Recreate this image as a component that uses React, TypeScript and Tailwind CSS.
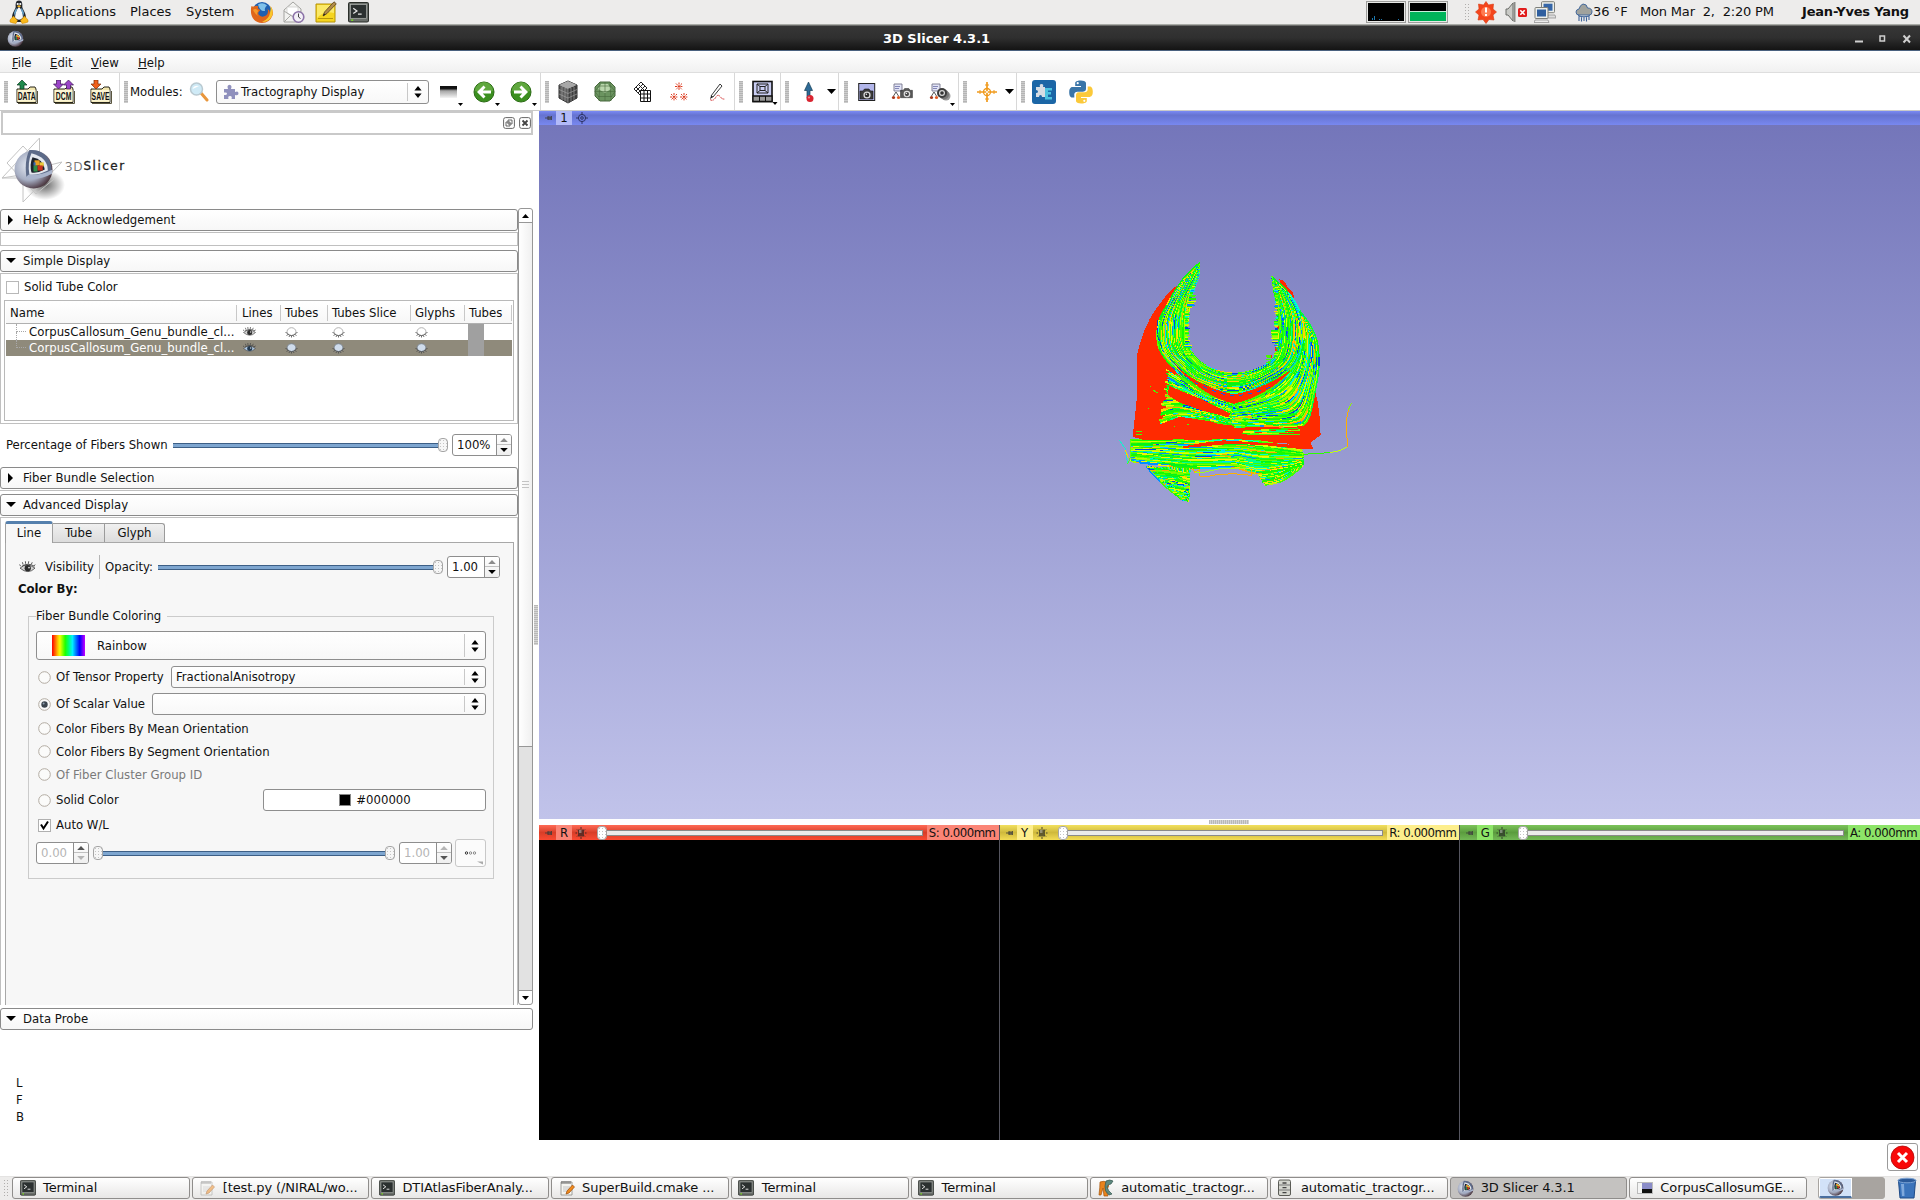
import React from "react";

type P = [number, number];
type KidProps = { className?: string; children?: React.ReactNode };

/* ---------- small shared widgets ---------- */

const Svg = ({ w, h, className = "", children, vb }: { w: number; h: number; className?: string; children: React.ReactNode; vb?: string }) => (
  <svg width={w} height={h} viewBox={vb ?? `0 0 ${w} ${h}`} className={`block shrink-0 ${className}`}>{children}</svg>
);

const Grip = ({ className = "" }: KidProps) => (
  <div className={`h-[22px] w-[4px] shrink-0 bg-[repeating-linear-gradient(180deg,#b4b4b4_0_1px,#cdcdcd_1px_2px)] ${className}`} />
);
const Sep = ({ className = "" }: KidProps) => <div className={`h-full w-px shrink-0 bg-[#d8d8d8] ${className}`} />;

const Dots = ({ className = "" }: KidProps) => (
  <div className={`shrink-0 bg-[radial-gradient(circle,#b0aeac_0.6px,transparent_1px)] bg-[length:3px_3px] ${className}`} />
);

const UpDown = () => (
  <div className="flex h-full w-[21px] shrink-0 items-center py-[2px]">
    <div className="h-full w-px bg-[#c8c8c8]" />
    <Svg w={8} h={12} className="ml-[6px]"><path d="M4 0L7.6 4.4H.4zM4 12L7.6 7.6H.4z" fill="#000" /></Svg>
  </div>
);

const Combo = ({ className = "", children }: KidProps) => (
  <div className={`flex items-center rounded-[3px] border border-[#8e8e8e] bg-linear-to-b from-white to-[#f8f8f8] ${className}`}>
    <div className="flex grow items-center">{children}</div>
    <UpDown />
  </div>
);

const Slider = ({ className = "", double = false }: { className?: string; double?: boolean }) => (
  <div className={`flex h-[14px] items-center ${className}`}>
    {double && <Thumb />}
    <div className="h-[5px] grow border-y border-[#3d5f86] bg-[#7ea6d0]" />
    <Thumb />
  </div>
);
const Thumb = ({ className = "" }: KidProps) => (
  <div className={`h-[14px] w-[10px] shrink-0 rounded-[4px] border border-[#a5a5a5] bg-[#f6f6f6] bg-[radial-gradient(circle,#c4c4c4_0.6px,transparent_1px)] bg-[length:3px_3px] ${className}`} />
);

const Spin = ({ value, className = "", off, up = "#8c8c8c", down = "#000" }: { value: string; className?: string; off?: boolean; up?: string; down?: string }) => (
  <div className={`flex h-[22px] shrink-0 overflow-hidden rounded-[3px] border border-[#8e8e8e] bg-white ${className}`}>
    <div className={`flex grow items-center pl-[4px] ${off ? "text-[#b5b5b5]" : ""}`}>{value}</div>
    <div className="flex w-[15px] flex-col border-l border-[#8e8e8e] bg-linear-to-b from-white to-[#efefef]">
      <div className="flex h-[10px] items-center justify-center border-b border-[#c0c0c0]">
        <Svg w={8} h={4}><path d="M4 0L7.8 4H.2z" fill={up} /></Svg>
      </div>
      <div className="flex h-[10px] items-center justify-center">
        <Svg w={8} h={4}><path d="M4 4L7.8 0H.2z" fill={down} /></Svg>
      </div>
    </div>
  </div>
);

const Section = ({ title, open, className = "" }: { title: string; open?: boolean; className?: string }) => (
  <div className={`flex h-[22px] shrink-0 items-center rounded-[3px] border border-[#8a8a8a] bg-linear-to-b from-white to-[#f7f7f7] ${className}`}>
    <Svg w={10} h={10} className="ml-[5px]">
      {open ? <path d="M0 2H10L5 7z" fill="#000" /> : <path d="M2 0V10L7 5z" fill="#000" />}
    </Svg>
    <span className="ml-[7px] tracking-[0.04px]">{title}</span>
  </div>
);

const Radio = ({ on, label, dim }: { on?: boolean; label: string; dim?: boolean }) => (
  <div className="flex shrink-0 items-center">
    <Svg w={13} h={13}>
      <circle cx="6.5" cy="6.5" r="5.8" fill="#fbfbfa" stroke="#b3aca3" />
      {on && <circle cx="6.5" cy="6.5" r="3.2" fill="#3b444d" />}
      {on && <circle cx="5.6" cy="5.6" r="1" fill="#8fa0b0" />}
    </Svg>
    <span className={`ml-[5px] ${dim ? "text-[#7a7a7a]" : ""}`}>{label}</span>
  </div>
);

/* ---------- icons ---------- */

const Ball = ({ w, className = "" }: { w: number; className?: string }) => (
  <svg width={w} height={w} viewBox="0 0 40 40" className={`block shrink-0 ${className}`}>
    <defs>
      <radialGradient id="ball" cx=".38" cy=".4" r=".7">
        <stop offset="0" stopColor="#e8edf6" /><stop offset=".55" stopColor="#a5adc2" /><stop offset=".85" stopColor="#5a4a55" /><stop offset="1" stopColor="#3a2226" />
      </radialGradient>
    </defs>
    <circle cx="20" cy="21" r="18.5" fill="url(#ball)" />
    <path d="M16 2Q11 12 13 28Q20 31 37 25A19 19 0 0 0 16 2z" fill="#5c6a88" />
    <path d="M18 5Q14 14 16 26Q24 27 34 22Q34 9 18 5z" fill="#e4e8ef" />
    <path d="M19 9Q16 16 18 24Q24 25 31 21Q30 11 19 9z" fill="#1c222c" />
    <path d="M20 17h4v6h-4z" fill="#2f8f4a" /><path d="M21 12h5v5h-5z" fill="#e8a020" /><path d="M26 14h4v4h-4z" fill="#e9c93c" />
    <path d="M24 17h5v5h-5z" fill="#c8321e" /><path d="M20 14h2v3h-2z" fill="#3468b8" />
    <path d="M12 29Q25 32 38 25L38.5 21Q28 27 15 26z" fill="#a9b4cc" />
  </svg>
);

const FolderIcon = ({ label, kind, className = "" }: { label: string; kind: "up" | "both" | "down"; className?: string }) => (
  <Svg w={22} h={24} className={className}>
    <path d="M1 9H12L14 7H19L20 9V22.5H1z" fill="#f2e6ad" stroke="#26241a" />
    <path d="M1.5 10H19.5V21.5H1.5z" fill="#fbf5d3" />
    <path d="M2 23.5H21.5V11" stroke="#5a5640" fill="none" />
    {kind === "up" && <path d="M6 0L11 5H8V9H4V5H1z" fill="#1f8a4c" stroke="#0d3b20" strokeWidth=".7" />}
    {kind === "both" && <><path d="M15.500 0L20.500 5H17.500V9H13.500V5H10.500z" fill="#9a45c8" stroke="#3a1350" strokeWidth=".7" /><path d="M5.500 9L10.500 4H7.500V0H3.500V4H.5z" fill="#9a45c8" stroke="#3a1350" strokeWidth=".7" /></>}
    {kind === "down" && <path d="M6 9L11 4H8V0H4V4H1z" fill="#f0601c" stroke="#7a2c08" strokeWidth=".7" />}
    <text transform="translate(10.600 20) scale(.68 1)" fontSize="10" fontWeight="bold" fontFamily="Liberation Sans, sans-serif" textAnchor="middle" fill="#111">{label}</text>
  </Svg>
);

const NavIcon = ({ right, className = "" }: { right?: boolean; className?: string }) => (
  <Svg w={22} h={22} className={className}>
    <circle cx="11" cy="11" r="10" fill="#3b8f1f" stroke="#2a6b14" />
    <path d="M2 10A9 9 0 0 1 20 10Q11 13 2 10z" fill="#6fb04c" opacity=".7" />
    <path transform={right ? "translate(22 0) scale(-1 1)" : undefined} d="M4 11L10.500 4.500L12.500 6.500L9.800 9.500H18V12.500H9.800L12.500 15.500L10.500 17.500z" fill="#fff" />
  </Svg>
);

const TinyTri = ({ className = "" }: KidProps) => <Svg w={5} h={3} className={className}><path d="M0 0H5L2.500 3z" fill="#000" /></Svg>;
const MenuTri = ({ className = "" }: KidProps) => <Svg w={9} h={5} className={className}><path d="M0 0H9L4.500 5z" fill="#000" /></Svg>;

const Camera = ({ x, y, s = 1 }: { x: number; y: number; s?: number }) => (
  <g transform={`translate(${x} ${y}) scale(${s})`}>
    <path d="M0 2H3L4.500 0H9L10.500 2H13V10H0z" fill="#3b3b3b" stroke="#151515" strokeWidth=".6" />
    <circle cx="7" cy="6" r="3.600" fill="#dcdcdc" /><circle cx="7" cy="6" r="2.300" fill="#2a2a2a" /><circle cx="6.400" cy="5.300" r=".8" fill="#e9e9e9" />
  </g>
);

const SceneCam = ({ layered }: { layered?: boolean }) => (
  <Svg w={22} h={18}>
    <path d="M3 1H11V8H3z" fill="#e2e4f6" stroke="#77778c" strokeWidth=".9" /><path d="M4 3.500H9M4 5.500H8" stroke="#6c70a8" strokeWidth=".8" />
    <path d="M2.500 13L5 9L7.500 13" stroke="#444" strokeWidth=".9" fill="none" />
    <circle cx="2.500" cy="14.500" r="1.600" fill="#a8381c" /><circle cx="7.500" cy="14.500" r="1.600" fill="#e05a22" />
    {layered ? (
      <><circle cx="17" cy="13" r="4.500" fill="#9a9a9a" /><circle cx="15" cy="11.500" r="5" fill="#777" /><circle cx="13" cy="10" r="5" fill="#3d3d3d" /><circle cx="13" cy="10" r="3" fill="#d8d8d8" /><circle cx="13" cy="10" r="1.800" fill="#333" /></>
    ) : <g opacity=".85"><Camera x={9.500} y={5.500} s={0.92} /></g>}
  </Svg>
);

const Terminal = ({ w = 16 }: { w?: number }) => (
  <svg width={w} height={w} viewBox="0 0 20 20" className="block shrink-0">
    <rect x=".5" y=".5" width="19" height="18.500" rx="1.500" fill="#6b6f6b" stroke="#2b2f2b" />
    <rect x="2.500" y="2.500" width="15" height="13" fill="#2b3030" stroke="#b8bcb8" strokeWidth=".6" />
    <path d="M5 6L8.500 8.500L5 11M9.500 11.500H13" stroke="#e5e5e5" fill="none" strokeWidth="1.200" />
    <path d="M3 17.300H5" stroke="#7cdc20" strokeWidth="1.400" />
  </svg>
);

const Notepad = ({ faded }: { faded?: boolean }) => (
  <Svg w={16} h={16} className={faded ? "opacity-50" : ""}>
    <path d="M2 2H13V15H2z" fill="#f4f4f0" stroke="#8a8a86" strokeWidth=".8" />
    <path d="M3 1V4M5 1V4M7 1V4M9 1V4M11 1V4" stroke="#555" strokeWidth=".9" />
    <path d="M4 7H11M4 9H11M4 11H9" stroke="#b8b8b8" strokeWidth=".8" />
    <path d="M7 14L8 11L13.500 5L15.500 7L10 13z" fill="#f08a1c" stroke="#9b4a08" strokeWidth=".7" />
  </Svg>
);

const Tux = () => (
  <Svg w={20} h={24}>
    <path d="M10 .5C6.500 .5 6.500 4 6.700 7C6 10 3 13 3 18L7 22H13L17 18C17 13 14 10 13.300 7C13.500 4 13.500 .5 10 .5z" fill="#20242b" />
    <path d="M10 7C8 9 6 13 6 17.500Q10 22 14 17.500C14 13 12 9 10 7z" fill="#f4f7fa" />
    <path d="M5 13C6 10 6.500 9 7.500 8L8 10C6.500 13 6 15 6 17z" fill="#68a5cf" /><path d="M15 13C14 10 13.500 9 12.500 8L12 10C13.500 13 14 15 14 17z" fill="#68a5cf" />
    <circle cx="8.700" cy="4" r="1.100" fill="#fff" /><circle cx="11.300" cy="4" r="1.100" fill="#fff" />
    <path d="M8 6Q10 4.500 12 6Q10 8.500 8 6z" fill="#f7b71e" />
    <path d="M1 20L4.500 16L8.500 20.500L7 23.500Q3 23 1 22zM19 20L15.500 16L11.500 20.500L13 23.500Q17 23 19 22z" fill="#f9b91c" stroke="#c5820b" strokeWidth=".5" />
  </Svg>
);

const Firefox = () => (
  <Svg w={24} h={24}>
    <circle cx="12" cy="11.500" r="9.500" fill="#1f5fb0" /><path d="M8 4.500Q13 1.500 17 5.500Q14 8 15 11Q10 12 8 4.500z" fill="#7fc1ea" />
    <path d="M1.500 6Q3 7 5 6Q7 5.500 8.500 6.500Q7 8 9.500 9.500Q11 10.500 9 11.500Q7.500 13 9 15Q12 18 16 15.500Q19 13 17.500 9Q20 10 20 13Q22 10 20.500 6Q24 11 22.500 15.500Q19.500 23 12 23Q3 22.500 1.200 14Q.5 9 1.500 6z" fill="#e0661a" />
    <path d="M20.500 6Q24 11 22 16Q19 22 12 22Q19 19 20 13Q21 9 20.500 6z" fill="#f9c62c" />
    <path d="M3 10Q4 8.500 6 9L8.500 11Q6 13 8 16Q5 14 3 10z" fill="#f59a2c" />
  </Svg>
);

const Mail = () => (
  <Svg w={22} h={23}>
    <path d="M1 9L10 1L18 8V21H1z" fill="#f2f2f0" stroke="#a3a3a0" /><path d="M4 6H15V12L10 15L4 12z" fill="#fff" stroke="#c8c8c6" strokeWidth=".7" />
    <path d="M1 10L9.500 15.500L18 10M1 21L8 14" stroke="#a9a9a6" fill="none" />
    <circle cx="15.500" cy="16" r="5.300" fill="#f3f0f7" stroke="#8c73a8" strokeWidth="1.600" /><path d="M15.500 12.500V16L17.500 17.500" stroke="#444" fill="none" />
  </Svg>
);

const Note = () => (
  <Svg w={22} h={22}>
    <path d="M1 3H20V21H1z" fill="#f6d51f" stroke="#b4920a" /><path d="M2 4H19V12Q9 9 2 17z" fill="#fbe968" />
    <path d="M3 17.500H18" stroke="#b9970c" />
    <path d="M8 15L9.500 11L19 .8L21.300 2.800L12 12.500z" fill="#b08a4a" stroke="#5a421c" strokeWidth=".8" /><path d="M8 15L9 12.500L10.500 13.800z" fill="#222" />
  </Svg>
);

const Python = () => (
  <Svg w={24} h={24}>
    <path d="M11.900 .5C6 .5 6.200 3 6.200 3V6H12V7H3.800C3.800 7 .2 6.600 .2 12.200C.2 17.800 3.300 17.500 3.300 17.500H5.300V14.700S5.200 11.700 8.300 11.700H14S17 11.700 17 8.800V3.500S17.500 .5 11.900 .5z" fill="#3a75a8" />
    <circle cx="8.700" cy="3.200" r="1.100" fill="#fff" />
    <path d="M12.100 23.500C18 23.500 17.800 21 17.800 21V18H12V17H20.200S23.800 17.400 23.800 11.800C23.800 6.300 20.700 6.500 20.700 6.500H18.700V9.300S18.800 12.300 15.700 12.300H10S7 12.300 7 15.200V20.500S6.500 23.500 12.100 23.500z" fill="#fbc93a" />
    <circle cx="15.300" cy="20.800" r="1.100" fill="#fff" />
  </Svg>
);

const Eye = ({ open, sel, big }: { open?: boolean; sel?: boolean; big?: boolean }) => (
  <Svg w={big ? 17 : 13} h={big ? 15 : 12} vb="0 0 13 12">
    {open ? (
      <>
        <path d="M.5 6.500Q6 1.500 12.500 6.500Q7 12 .5 6.500z" fill={sel ? "#a9c3de" : "#d4d4d4"} stroke="#555" strokeWidth=".7" />
        <circle cx="6.700" cy="6.500" r="2.500" fill={sel ? "#23394e" : "#2b2b2b"} />
        <circle cx="7.700" cy="6" r=".7" fill="#ddd" />
        <path d="M1 5L.2 3.600M3 3.700L2.400 1.800M5 3L4.800 1M7.200 3L7.500 1M9.500 3.500L10.300 1.800M11.500 5L12.600 3.600M2 5Q7 1.800 12 5" stroke="#444" strokeWidth=".7" fill="none" />
      </>
    ) : (
      <>
        <ellipse cx="6.500" cy="5.700" rx="4.400" ry="4" fill={sel ? "#cfdcec" : "#fff"} stroke={sel ? "#77808a" : "#aaa"} strokeWidth=".9" />
        <path d="M2.300 7.500Q6.500 11.500 10.700 7.500M.5 6.500L2 7M1.500 9.500L3 8.500M4 11L4.600 9.600M6.500 11.500V10M9 11L8.400 9.600M11.500 9.500L10 8.500M12.500 6.500L11 7" stroke="#4a4a4a" strokeWidth=".8" fill="none" />
      </>
    )}
  </Svg>
);

const Pin = () => <Svg w={7} h={6}><path d="M0 3H3M3 1V5M3 2H6V4.200H3zM6.500 1V5" stroke="#3a3a3a" fill="#555" strokeWidth="1" opacity=".8" /></Svg>;

/* ---------- fiber tracts ---------- */

let seed = 20431;
const rnd = () => {
  seed = (seed * 1664525 + 1013904223) >>> 0;
  return seed / 4294967296;
};
const palette = ["#10ff00", "#40ff00", "#00f41c", "#5cff00", "#78ff00", "#22f400", "#98ff00", "#00ff40", "#b8ff00", "#dcff00", "#f6f600", "#ffd400", "#ffa800", "#00ff90", "#00ffd0", "#00d8ff", "#0090ff", "#0048e0"];
const pick = () => palette[Math.floor(Math.pow(rnd(), 1.45) * palette.length)];

const sample = (pts: P[], n: number): P[] => {
  const out: P[] = [];
  const segs = pts.length - 1;
  for (let k = 0; k <= n; k++) {
    const u = (k / n) * segs;
    const i = Math.min(segs - 1, Math.floor(u));
    const t = u - i;
    const a = pts[Math.max(0, i - 1)], b = pts[i], c = pts[i + 1], d = pts[Math.min(segs, i + 2)];
    const f = (j: 0 | 1) =>
      0.5 * (2 * b[j] + (c[j] - a[j]) * t + (2 * a[j] - 5 * b[j] + 4 * c[j] - d[j]) * t * t + (3 * b[j] - a[j] - 3 * c[j] + d[j]) * t * t * t);
    out.push([f(0), f(1)]);
  }
  return out;
};

type Run = { d: string; c: string };
const bundle = (a: P[], b: P[], count: number, n: number, trim = 0, run = 8): Run[] => {
  const A = sample(a, n), B = sample(b, n), out: Run[] = [];
  for (let i = 0; i <= count; i++) {
    const t = i / count;
    const tone = pick();
    const start = Math.floor(rnd() * trim), end = n - Math.floor(rnd() * trim);
    let k = start;
    while (k < end) {
      const len = Math.min(end - k, 1 + Math.floor(rnd() * run));
      let d = "";
      for (let j = k; j <= k + len; j++) {
        const x = A[j][0] * (1 - t) + B[j][0] * t;
        const y = A[j][1] * (1 - t) + B[j][1] * t;
        d += `${d ? "L" : "M"}${x.toFixed(1)} ${y.toFixed(1)}`;
      }
      out.push({ d, c: rnd() < 0.4 ? tone : pick() });
      k += len;
    }
  }
  return out;
};

const rightFan = bundle(
  [[396, 492], [470, 474], [540, 430], [590, 370], [605, 290], [590, 205], [515, 108]],
  [[396, 562], [500, 558], [610, 556], [644, 460], [657, 350], [630, 255], [515, 108]], 44, 72, 2, 9);
const leftFan = bundle(
  [[198, 388], [250, 424], [320, 466], [400, 494]],
  [[176, 552], [240, 532], [320, 538], [400, 556]], 44, 44, 6, 8);
const crown = bundle(
  [[299, 68], [296, 108], [276, 165], [264, 240], [268, 322], [320, 378], [405, 400], [490, 378], [530, 335], [536, 240], [523, 160], [515, 108]],
  [[299, 68], [252, 113], [200, 195], [172, 265], [187, 345], [280, 430], [400, 462], [510, 430], [590, 370], [612, 270], [582, 180], [515, 108]], 42, 120, 3, 9);
const base = bundle(
  [[90, 600], [180, 598], [300, 602], [400, 598], [500, 606], [610, 632]],
  [[90, 664], [150, 672], [280, 684], [400, 684], [480, 700], [612, 676]], 34, 58, 2, 10);
const wingL = bundle([[270, 684], [268, 730], [266, 784]], [[138, 680], [190, 735], [250, 782]], 44, 12, 1, 4);
const wingL2 = bundle([[142, 682], [200, 690], [270, 700]], [[240, 776], [255, 780], [266, 784]], 30, 18, 1, 5);
const wingR = bundle([[465, 688], [540, 680], [610, 650]], [[492, 736], [550, 722], [608, 680]], 20, 26, 2, 6);
const midRight = bundle([[415, 572], [500, 570], [600, 564]], [[430, 584], [500, 584], [600, 583]], 3, 24, 6, 5);

const Runs = ({ runs }: { runs: Run[] }) => <>{runs.map((r, i) => <path key={i} d={r.d} stroke={r.c} />)}</>;

const Fibers = () => (
  <svg width={270} height={280} viewBox="0 0 810 840" className="block" shapeRendering="crispEdges">
    <g fill="#ff2a00">
      <path d="M235 135L215 148L196 170L170 204L150 235L134 270L120 310L111 345L112 460L106 520L98 590L130 600L560 610L600 628L640 628L632 608L662 585L658 520L652 480L645 455L600 500L400 520L230 400L180 320L172 250Z" />
      <path d="M538 118L552 122L562 140L580 158L582 182L600 215L580 200L545 150Z" />
    </g>
    <g fill="none" strokeWidth={4.200}>
      <path d="M225 400L205 540L400 556L608 552L640 450L650 330L600 370L400 490Z" fill="#4df200" />
      <Runs runs={leftFan} />
      <Runs runs={rightFan} />
      <Runs runs={crown} />
      <path d="M232 382Q310 446 402 463Q490 448 574 390Q500 470 402 491Q310 470 232 382Z" fill="#ff2a00" />
      <path d="M205 466L206 436L240 452L300 476L390 520L386 532L300 510L235 486Z" fill="#ff2a00" />
      <path d="M98 590L182 555L210 542L240 530L330 544L400 566L480 568L610 558L655 562L640 596L400 600Z" fill="#ff2a00" />
      <Runs runs={midRight} />
      <Runs runs={wingL} />
      <Runs runs={wingL2} />
      <Runs runs={wingR} />
      <Runs runs={base} />
    </g>
    <g fill="#ff2a00">
      <path d="M98 590L640 596L636 606L500 602L370 596L130 600Z" />
      <path d="M245 620L300 610L370 601L480 608L560 612L610 628L500 616L400 611L320 618L250 624Z" />
      <path d="M528 152h5v20h-5zM532 258h5v10h-5zM526 322h6v12h-6zM512 345h4v10h-4zM525 268h5v8h-5z" />
    </g>
    <g fill="none" strokeWidth={3}>
      <path d="M610 643L640 641L690 638" stroke="#2cff00" /><path d="M690 638L720 632L742 621" stroke="#c0ff10" />
      <path d="M742 621L739 540L745 510" stroke="#ffb000" /><path d="M745 510L754 490" stroke="#90f010" />
      <path d="M58 600L75 625L83 672" stroke="#20e8d0" /><path d="M83 672L92 650L90 600" stroke="#58ff10" /><path d="M75 630L86 655" stroke="#ffd000" />
      <path d="M276 684L284 697L298 690L300 709L325 709L350 704L400 701L454 706L454 684" stroke="#ffb000" />
      <path d="M284 697H310L360 686H440M470 684L462 704" stroke="#9dff20" />
      <path d="M150 438h4M158 450L175 460M144 504h4M108 574h18M108 582h18M222 560h4M262 553h4M440 582H600M500 576H560" stroke="#40ff00" />
      <path d="M215 380Q310 455 400 468Q470 462 520 436" stroke="#0060ff" strokeDasharray="12 16" />
      <path d="M172 240L174 290L190 335" stroke="#0048c8" strokeDasharray="18 5" />
      <path d="M586 240L588 300" stroke="#0058e8" strokeDasharray="12 6" />
      <path d="M270 165V195M548 235V262M532 225V245M562 262V300" stroke="#0060ff" strokeDasharray="8 4" strokeWidth={5} />
    </g>
    {/* ragged inner fiber ends */}
    <g strokeWidth={3}>
      {Array.from({ length: 72 }, (_, i) => {
        const y = 132 + i * 3;
        const edge = 282 - Math.min(20, i * 0.7);
        const left = rnd() * 8 + (i > 10 && i < 26 ? 9 : 0) + (i > 60 ? 8 : 0);
        const right = rnd() * 7 + (i > 44 && i < 58 ? 9 : 0);
        return rnd() < 0.25 ? null : <path key={i} d={`M${edge - 6} ${y}h${left + 6}M${528 - right} ${y + 5}h${right + 5}`} stroke={pick()} />;
      })}
      <path d="M498 346h16M498 349h16M501 352h12M498 358h14M504 364h10M498 367h12" stroke="#48f800" />
    </g>
  </svg>
);

/* ---------- data ---------- */

const rows = [
  { name: "CorpusCallosum_Genu_bundle_cl...", sel: false },
  { name: "CorpusCallosum_Genu_bundle_cl...", sel: true },
];

const slices = [
  { l: "R", v: "S: 0.000mm", bar: "from-[#ff6a55] via-[#d83e28] to-[#fb4a32]", tag: "bg-[#fb8576]" },
  { l: "Y", v: "R: 0.000mm", bar: "from-[#f2e05e] via-[#cfb93c] to-[#f3dc55]", tag: "bg-[#fdee8c]" },
  { l: "G", v: "A: 0.000mm", bar: "from-[#7cc45a] via-[#5b9c3e] to-[#73b856]", tag: "bg-[#8de468]" },
];

const Paraview = () => (
  <Svg w={16} h={18}><path d="M2 3Q6 1 10 4Q12 8 8 11L10 17H6L5 9L3 16H1Q2 8 2 3z" fill="#e8831c" stroke="#a3540c" strokeWidth=".7" /><path d="M8 2Q12 0 15 2L13 5Q10 5 9 8Q10 12 14 15L11 16Q6 12 7 7z" fill="#5f8a80" stroke="#33564e" strokeWidth=".7" /></Svg>
);
const Cabinet = () => (
  <Svg w={16} h={18}><rect x="1.500" y="1" width="12" height="15.500" rx="1.500" fill="#d5d6cf" stroke="#5a5b55" /><path d="M2 6H13M2 11H13" stroke="#777" /><path d="M5.500 4H9.500M5.500 8.700H9.500M5.500 13.700H9.500" stroke="#444" strokeWidth="1.300" /></Svg>
);
const Thumbnail = () => (
  <Svg w={16} h={16}><rect x=".5" y="2.500" width="15" height="11" fill="#f4f4f4" stroke="#bbb" /><rect x="5" y="3" width="10" height="6" fill="#8a8cc8" /><rect x="5" y="9" width="10" height="4" fill="#111" /></Svg>
);

const tasks: { t: string; icon: React.ReactNode; active?: boolean }[] = [
  { t: "Terminal", icon: <Terminal /> },
  { t: "[test.py (/NIRAL/wo...", icon: <Notepad faded /> },
  { t: "DTIAtlasFiberAnaly...", icon: <Terminal /> },
  { t: "SuperBuild.cmake ...", icon: <Notepad /> },
  { t: "Terminal", icon: <Terminal /> },
  { t: "Terminal", icon: <Terminal /> },
  { t: "automatic_tractogr...", icon: <Paraview /> },
  { t: "automatic_tractogr...", icon: <Cabinet /> },
  { t: "3D Slicer 4.3.1", icon: <Ball w={17} />, active: true },
  { t: "CorpusCallosumGE...", icon: <Thumbnail /> },
];

/* ---------- regions ---------- */

const TopPanel = () => (
  <div className="flex h-[25px] items-center border-b border-[#a9aba6] bg-[#edeceb] font-['DejaVu_Sans',sans-serif] [font-stretch:normal]">
    <div className="ml-[9px]"><Tux /></div>
    <span className="ml-[7px] w-[94px] tracking-[0.05px]">Applications</span>
    <span className="w-[56px]">Places</span>
    <span className="w-[64px]">System</span>
    <Firefox />
    <div className="ml-[9px]"><Mail /></div>
    <div className="ml-[10px]"><Note /></div>
    <div className="ml-[11px]"><Terminal w={21} /></div>
    <div className="ml-auto h-[22px] w-[40px] border border-[#9d9d9b] bg-black outline-1 -outline-offset-2 outline-[#e8e8e6]">
      <Svg w={38} h={20}><path d="M5.500 18V16M7.500 18V14M12.500 18V17M14.500 18V17M31.500 18V17" stroke="#1b78b0" /></Svg>
    </div>
    <div className="ml-[2px] flex h-[22px] w-[40px] flex-col justify-end border border-[#9d9d9b] bg-black p-px outline-1 -outline-offset-2 outline-[#e8e8e6]">
      <div className="h-[10px] border-t border-[#c8f0dc] bg-[#00b45a]" />
    </div>
    <Dots className="ml-[16px] h-[18px] w-[6px]" />
    <Svg w={22} h={23} className="ml-[5px]">
      <path d="M11 .5L13.500 4L18.500 3L18 8L21.500 11L18 14L19 19L14 18.500L11 22.500L8 18.500L3 19L4 14L.5 11L4 8L3.500 3L8.500 4z" fill="#f4451c" stroke="#d83a10" strokeWidth=".6" />
      <circle cx="11" cy="11" r="5" fill="#ff7a50" /><path d="M10 6.500H12V11.500H10zM10 13H12V15H10z" fill="#fff" />
    </Svg>
    <Svg w={22} h={22} className="ml-[8px]">
      <path d="M1 8H3L8 2V20L3 14H1z" fill="#c9cac6" stroke="#6b6c68" /><path d="M9.500 1V21" stroke="#8b8c88" strokeWidth="2" />
      <rect x="13" y="7" width="9" height="9" rx="1.500" fill="#e01b1b" /><path d="M15.300 9.300L19.700 13.700M19.700 9.300L15.300 13.700" stroke="#fff" strokeWidth="1.600" />
    </Svg>
    <Svg w={22} h={22} className="ml-[7px]">
      <rect x="7.500" y=".7" width="13" height="11" rx="1" fill="#eceeea" stroke="#7d7f7a" /><rect x="9.500" y="2.700" width="9" height="7" fill="#3566a8" />
      <path d="M14 14H21L22 17H13z" fill="#ddd" stroke="#888" strokeWidth=".7" />
      <rect x="1" y="6.500" width="13" height="11" rx="1" fill="#eceeea" stroke="#7d7f7a" /><rect x="3" y="8.500" width="9" height="7" fill="#2f5f9f" />
      <path d="M1 19H14L15 21.500H0z" fill="#eee" stroke="#888" strokeWidth=".7" />
    </Svg>
    <Svg w={18} h={20} className="ml-[19px]">
      <path d="M8 2Q12 2 12.500 6Q17 6 17 10Q17 13 14 13H4Q1 13 1 10Q1 7.500 4 7Q5 3 8 2z" fill="#a0a29d" stroke="#456a9c" />
      <path d="M3 13.500Q9 16 15 13.500M4 14.500V19M6.500 15V19.500M9 15V19M11.500 15V19.500M14 14.500V18" stroke="#3e6399" strokeWidth="1.100" fill="none" />
    </Svg>
    <span className="w-[47px] whitespace-pre">36 °F</span>
    <span className="w-[162px] whitespace-pre tracking-[-0.18px]">Mon Mar  2,  2:20 PM</span>
    <span className="w-[118px] font-bold tracking-[-0.2px]">Jean-Yves Yang</span>
  </div>
);

const TitleBar = () => (
  <div className="flex h-[26px] items-center border-t border-b border-t-[#6b6b69] border-b-[#4a617f] bg-linear-to-b from-[#363636] via-[#2f2f2f] to-[#141414] pt-px font-['DejaVu_Sans',sans-serif] [font-stretch:normal]">
    <Ball w={17} className="mb-px ml-[7px]" />
    <div className="ml-[859px] w-[972px] font-bold text-white">3D Slicer 4.3.1</div>
    <Svg w={56} h={10}>
      <path d="M0 7.500H8" stroke="#cfcfcf" strokeWidth="2" /><rect x="25" y="2" width="4.500" height="5" fill="none" stroke="#cfcfcf" strokeWidth="1.500" />
      <path d="M48.500 1.500L55 8.500M55 1.500L48.500 8.500" stroke="#cfcfcf" strokeWidth="2" />
    </Svg>
  </div>
);

const Toolbar = () => (
  <div className="flex h-[38px] items-center border-b border-[#c9c9c9] bg-white">
    <Grip className="ml-[4px]" />
    <FolderIcon label="DATA" kind="up" className="ml-[8px]" />
    <FolderIcon label="DCM" kind="both" className="ml-[15px]" />
    <FolderIcon label="SAVE" kind="down" className="ml-[15px]" />
    <Sep className="ml-[7px]" />
    <Grip className="ml-[4px]" />
    <span className="ml-[2px] w-[59px]">Modules:</span>
    <Svg w={20} h={20}>
      <path d="M12 11L18 18" stroke="#e8963c" strokeWidth="3" strokeLinecap="round" /><circle cx="7.500" cy="7" r="6" fill="#cfeaf6" stroke="#b9c9d0" strokeWidth="1.500" /><path d="M3.500 7Q5 3 10 4Q6 6 3.500 7z" fill="#fff" />
    </Svg>
    <Combo className="ml-[7px] h-[24px] w-[213px]">
      <Svg w={16} h={16} className="ml-[6px]">
        <path d="M1 5H5Q3.500 1 6.500 .7Q9.500 1 8 5H12V8Q15.500 6.500 15.500 9.500Q15.500 12 12 11V15H8.500Q9.500 12 7 12Q4.500 12 5.500 15H1V11Q4 11.500 4 9.500Q4 8 1 8.500z" fill="#8f90bd" />
      </Svg>
      <span className="ml-[2px]">Tractography Display</span>
    </Combo>
    <div className="ml-[11px] h-[12px] w-[17px] bg-linear-to-b from-[#111] from-20% via-[#a5a5a5] via-40% to-[#f5f5f5]" />
    <TinyTri className="ml-px mt-[26px]" />
    <NavIcon className="ml-[10px]" />
    <TinyTri className="mt-[26px]" />
    <NavIcon right className="ml-[10px]" />
    <TinyTri className="mt-[26px]" />
    <Sep className="ml-[3px]" />
    <Grip className="ml-[4px]" />
    <Svg w={20} h={24} className="ml-[9px]">
      <path d="M10 1L19 5V18L10 23L1 18V5z" fill="#5c5c5c" stroke="#2c2c2c" /><path d="M10 1L19 5L10 9L1 5z" fill="#a8a8a8" /><path d="M10 9L19 5V18L10 23z" fill="#3d3d3d" />
      <path d="M4 7V20M7 8V21.500M13 8V21.500M16 7V20M1 9.500L10 13.500L19 9.500M1 14L10 18L19 14M4 4L13 8M7 2.500L16 6.500M16 4L7 8M13 2.500L4 6.500M10 9V23" stroke="#a8a8a8" strokeWidth=".6" fill="none" />
    </Svg>
    <Svg w={22} h={22} className="ml-[16px]">
      <path d="M6 1H16L21 6V15L16 20H6L1 15V6z" fill="#6b9460" stroke="#48683e" /><path d="M7 3H14L17 8L11 12L4 8z" fill="#b9d6ac" />
      <path d="M1 10.500H21M11 1V20M5 5H17M4 15.500H18M6 1L5 20M16 1L17 20M5 5L1 10.500L5 16M17 5L21 10.500L17 16" stroke="#466a3c" strokeWidth=".6" fill="none" />
    </Svg>
    <Svg w={18} h={22} className="ml-[17px]">
      <path d="M1 8L8 1L14 7L7 14z" fill="#fff" stroke="#222" /><path d="M3 10L10 3M5 12L12 5M3 6L9 12M5.500 3.500L11.500 9.500" stroke="#222" strokeWidth="1" />
      <path d="M7.500 9.500H17.500V20.500H7.500z" fill="#fff" stroke="#111" /><path d="M11 9V21M14.500 9V21M7 13H18M7 17H18" stroke="#111" />
    </Svg>
    <Svg w={20} h={20} className="ml-[18px]">
      <g stroke="#dd3a1e" strokeWidth="1" strokeDasharray="2 .7">
        {([[10, 4.500], [5, 15], [15, 15]] as P[]).map(([x, y], i) => <path key={i} d={`M${x} ${y - 4}V${y + 4}M${x - 4} ${y}H${x + 4}M${x - 3} ${y - 3}L${x + 3} ${y + 3}M${x + 3} ${y - 3}L${x - 3} ${y + 3}`} />)}
      </g>
    </Svg>
    <Svg w={18} h={20} className="ml-[19px]">
      <path d="M3 14L12 2L14 4L5 15z" fill="#fff" stroke="#222" strokeWidth=".9" /><path d="M3 14L2 17L5 15z" fill="#111" />
      <path d="M2 17.500Q5 20 8 15Q10 11.500 12.500 15Q14 17.500 17 17" stroke="#d84848" fill="none" strokeDasharray="2 .6" />
    </Svg>
    <Sep className="ml-[8px]" />
    <Grip className="ml-[4px]" />
    <Svg w={26} h={26} className="ml-[9px]">
      <rect x="1" y="2.500" width="19" height="20" fill="#c9cdf2" stroke="#111" strokeWidth="1.600" /><path d="M5 5H16V14H5zM8 7.500H13V11.500H8zM5 5L8 7.500M16 5L13 7.500M5 14L8 11.500M16 14L13 11.500" fill="none" stroke="#222" />
      <path d="M1 17H20V22.500H1z" fill="#999" stroke="#111" strokeWidth="1.300" /><path d="M7.500 17V22.500M13.500 17V22.500" stroke="#111" />
      <path d="M20.500 23H25.500L23 26z" fill="#000" />
    </Svg>
    <Sep className="ml-[2px]" />
    <Grip className="ml-[4px]" />
    <Svg w={12} h={22} className="ml-[14px]">
      <path d="M5.500 1L9.500 9.500H7V17H4V9.500H1.500z" fill="#2d6a96" stroke="#184058" strokeWidth=".7" /><circle cx="7" cy="17.500" r="3.500" fill="#d92430" /><circle cx="6" cy="16.500" r="1" fill="#f59098" />
    </Svg>
    <MenuTri className="ml-[12px]" />
    <Sep className="ml-[2px]" />
    <Grip className="ml-[5px]" />
    <Svg w={18} h={20} className="ml-[10px]"><rect x=".7" y="1.500" width="16" height="17" fill="#b2b6ea" stroke="#222" /><Camera x={2} y={7} s={1} /></Svg>
    <div className="ml-[15px]"><SceneCam /></div>
    <div className="ml-[16px]"><SceneCam layered /></div>
    <TinyTri className="-ml-px mt-[26px]" />
    <Sep className="ml-[3px]" />
    <Grip className="ml-[4px]" />
    <Svg w={20} h={20} className="ml-[10px]">
      <path d="M10 0V20M0 10H20" stroke="#f09a1c" strokeWidth="1.700" /><circle cx="10" cy="10" r="3.500" fill="none" stroke="#f09a1c" strokeWidth="1.300" /><path d="M8 3H12M8 17H12M3 8V12M17 8V12" stroke="#f09a1c" />
      <circle cx="10" cy="10" r="1" fill="#fff" />
    </Svg>
    <MenuTri className="ml-[8px]" />
    <Sep className="ml-[2px]" />
    <Grip className="ml-[4px]" />
    <Svg w={24} h={24} className="ml-[7px]">
      <rect width="24" height="24" rx="3" fill="#1b66a6" />
      <path d="M4 7H8Q7 4 9.500 4Q12 4 11 7H13V17H10Q10 15 8.500 15Q7 15 7 17H4V13Q6 13 6 11.500Q6 10 4 10z" fill="#d6dde4" />
      <path d="M13 8H20V10.500H16V12H19V14.500H16V17H20V19.500H13z" fill="#4cc3e0" />
    </Svg>
    <div className="ml-[13px]"><Python /></div>
  </div>
);

const SidePanel = () => (
  <div className="flex h-[1029px] w-[539px] shrink-0 flex-col bg-white">
    <div className="mb-px ml-px flex h-[24px] w-[532px] shrink-0 items-center justify-end border-2 border-[#c9c9c9]">
      <Svg w={12} h={12}><rect x=".6" y=".6" width="10.800" height="10.800" rx="2" fill="#fff" stroke="#666" /><path d="M5 3H9V7H5zM3 5H7V9H3z" fill="#fff" stroke="#555" strokeWidth=".9" /></Svg>
      <Svg w={12} h={12} className="ml-[4px]"><rect x=".6" y=".6" width="10.800" height="10.800" rx="2" fill="#fff" stroke="#666" /><path d="M3.500 3.500L8.500 8.500M8.500 3.500L3.500 8.500" stroke="#444" strokeWidth="1.800" /></Svg>
    </div>
    <div className="flex h-[72px] shrink-0">
      <Svg w={65} h={72}>
        <defs>
          <radialGradient id="shade"><stop offset="0" stopColor="#000" stopOpacity=".6" /><stop offset="1" stopColor="#000" stopOpacity="0" /></radialGradient>
        </defs>
        <ellipse cx="45" cy="49" rx="20" ry="15" fill="url(#shade)" />
        <path d="M39.500 2V36L2 42L39.500 2zM23 10L7 27L36 58L54 43zM62 26L23 66V20M62 26L30 34M2 42H30" fill="none" stroke="#c4c4c4" />
        <svg x="13" y="12" width="41" height="41"><Ball w={41} /></svg>
      </Svg>
      <div className="mt-[24px] flex h-[12px] items-center font-['DejaVu_Sans',sans-serif] text-[12px] tracking-[1.5px] [font-stretch:normal]">
        <span className="font-['Open_Sans',sans-serif] text-[13px] tracking-[0.8px] text-[#777]">3D</span><span className="text-[#222] [-webkit-text-stroke:0.3px_#222]">Slicer</span>
      </div>
    </div>
    <div className="flex h-[797px] shrink-0">
      <div className="flex w-[518px] flex-col overflow-hidden">
        <Section title="Help & Acknowledgement" className="mt-px" />
        <div className="mt-[1px] h-[14px] shrink-0 border border-[#c0c0c0]" />
        <Section title="Simple Display" open className="mt-[4px]" />
        <div className="mt-px flex h-[151px] shrink-0 flex-col border border-[#c0c0c0] px-[3px]">
          <div className="mt-[5px] ml-[2px] flex items-center">
            <div className="h-[13px] w-[13px] border border-[#b8b8b8] bg-white" />
            <span className="ml-[5px]">Solid Tube Color</span>
          </div>
          <div className="mt-[5px] h-[121px] border border-[#b9b9b9] p-px">
            <div className="flex h-[22px] items-center border-b border-[#b0b0b0] bg-linear-to-b from-white to-[#f7f7f7]">
              <span className="ml-[4px] w-[226px]">Name</span>
              <i className="h-[16px] w-px bg-[#c8c8c8]" /><span className="ml-[5px] w-[38px]">Lines</span>
              <i className="h-[16px] w-px bg-[#c8c8c8]" /><span className="ml-[4px] w-[42px]">Tubes</span>
              <i className="h-[16px] w-px bg-[#c8c8c8]" /><span className="ml-[4px] w-[78px]">Tubes Slice</span>
              <i className="h-[16px] w-px bg-[#c8c8c8]" /><span className="ml-[4px] w-[49px]">Glyphs</span>
              <i className="h-[16px] w-px bg-[#c8c8c8]" /><span className="ml-[4px] w-[42px]">Tubes</span>
              <i className="h-[16px] w-px bg-[#c8c8c8]" />
            </div>
            {rows.map((r, i) => (
              <div key={i} className={`flex h-[16px] items-center ${r.sel ? "bg-[#8f8a7b] text-white" : ""}`}>
                <div className="ml-[10px] flex h-full w-[13px] flex-col">
                  <div className="h-[8px] w-[10px] border-b border-l border-dotted border-[#a8a8a8]" />
                  {!r.sel && <div className="h-[8px] w-[10px] border-l border-dotted border-[#a8a8a8]" />}
                </div>
                <span className="w-[214px] whitespace-nowrap tracking-[0.03px]">{r.name}</span>
                <Eye open sel={r.sel} />
                <div className="ml-[29px]"><Eye sel={r.sel} /></div>
                <div className="ml-[34px]"><Eye sel={r.sel} /></div>
                <div className="ml-[70px]"><Eye sel={r.sel} /></div>
                <div className="ml-[40px] h-full w-[16px] bg-[#a0a0a0]" />
              </div>
            ))}
          </div>
        </div>
        <div className="mt-[10px] flex h-[22px] shrink-0 items-center pl-[6px]">
          <span className="w-[167px]">Percentage of Fibers Shown</span>
          <Slider className="w-[275px]" />
          <Spin value="100%" className="ml-[4px] w-[60px]" />
        </div>
        <Section title="Fiber Bundle Selection" className="mt-[11px]" />
        <div className="mt-px h-px shrink-0 bg-[#c0c0c0]" />
        <Section title="Advanced Display" open className="mt-[3px]" />
        <div className="mt-px flex grow flex-col border border-b-0 border-[#c0c0c0] pl-[4px] pr-[3px]">
          <div className="mt-[3px] flex h-[21px] shrink-0 items-end">
            <div className="z-10 -mb-px flex h-[22px] w-[48px] items-center justify-center rounded-t-[3px] border border-b-0 border-t-3 border-[#a0a0a0] border-t-[#5580ad] bg-[#f7f7f7] pb-px">Line</div>
            <div className="flex h-[19px] w-[52px] items-center justify-center border border-b-0 border-l-0 border-[#9b9b9b] bg-linear-to-b from-[#f0f0f0] to-[#dcdcdc]">Tube</div>
            <div className="flex h-[19px] w-[60px] items-center justify-center rounded-tr-[3px] border border-b-0 border-l-0 border-[#9b9b9b] bg-linear-to-b from-[#f0f0f0] to-[#dcdcdc]">Glyph</div>
          </div>
          <div className="flex grow flex-col border border-b-0 border-[#a8a8a8] bg-[#f7f7f7]">
            <div className="mt-[12px] flex h-[24px] shrink-0 items-center pl-[13px]">
              <Eye open big />
              <span className="ml-[9px] w-[54px]">Visibility</span>
              <div className="h-[24px] w-px bg-[#b5b5b5]" />
              <span className="ml-[5px] w-[53px]">Opacity:</span>
              <Slider className="w-[285px]" />
              <Spin value="1.00" className="ml-[4px] w-[53px]" />
            </div>
            <div className="mt-[2px] flex h-[16px] shrink-0 items-center pl-[12px] font-bold">Color By:</div>
            <div className="mt-[19px] ml-[22px] flex h-[263px] w-[466px] shrink-0 flex-col border border-[#cbcbcb] pl-[7px]">
              <div className="-mt-[9px] flex h-[16px] w-[131px] shrink-0 items-center bg-[#f7f7f7]">Fiber Bundle Coloring</div>
              <Combo className="mt-[7px] h-[29px] w-[450px] shrink-0">
                <div className="ml-[15px] h-[21px] w-[33px] bg-[linear-gradient(90deg,#ff1000_2%,#ffc800_18%,#f0ff00_24%,#20ff00_40%,#00ff70_50%,#00f0ff_62%,#0080ff_72%,#0000ff_84%,#b000ff_98%)]" />
                <span className="ml-[12px]">Rainbow</span>
              </Combo>
              <div className="mt-[6px] flex h-[22px] shrink-0 items-center pl-[2px]">
                <Radio label="Of Tensor Property" />
                <Combo className="mr-[7px] ml-auto h-[22px] w-[315px]"><span className="ml-[4px]">FractionalAnisotropy</span></Combo>
              </div>
              <div className="mt-[5px] flex h-[22px] shrink-0 items-center pl-[2px]">
                <Radio on label="Of Scalar Value" />
                <Combo className="mr-[7px] ml-auto h-[22px] w-[334px]" />
              </div>
              <div className="mt-[2px] flex h-[23px] shrink-0 items-center pl-[2px]"><Radio label="Color Fibers By Mean Orientation" /></div>
              <div className="flex h-[23px] shrink-0 items-center pl-[2px]"><Radio label="Color Fibers By Segment Orientation" /></div>
              <div className="flex h-[23px] shrink-0 items-center pl-[2px]"><Radio dim label="Of Fiber Cluster Group ID" /></div>
              <div className="mt-[3px] flex h-[22px] shrink-0 items-center pl-[2px]">
                <Radio label="Solid Color" />
                <div className="mr-[7px] ml-auto flex h-[22px] w-[223px] items-center justify-center rounded-[3px] border border-[#8e8e8e] bg-white pl-px">
                  <div className="h-[12px] w-[12px] border border-[#888] bg-black" /><span className="ml-[5px]">#000000</span>
                </div>
              </div>
              <div className="mt-[6px] flex h-[16px] shrink-0 items-center pl-[2px]">
                <Svg w={13} h={13}><rect x=".5" y=".5" width="12" height="12" fill="#fff" stroke="#b0b0b0" /><path d="M3 5.500L5.500 9.500L10 2.500" fill="none" stroke="#000" strokeWidth="2" /></Svg>
                <span className="ml-[5px]">Auto W/L</span>
              </div>
              <div className="mt-[6px] flex h-[28px] shrink-0 items-center">
                <Spin value="0.00" off up="#555" down="#b5b5b5" className="w-[53px]" />
                <Slider double className="ml-[4px] w-[302px]" />
                <Spin value="1.00" off up="#b5b5b5" down="#555" className="ml-[4px] w-[53px]" />
                <div className="ml-[3px] flex h-[28px] w-[31px] items-center justify-center rounded-[3px] border border-[#c8c8c8] bg-[#fbfbfb]">
                  <Svg w={29} h={26}><g fill="none" stroke="#888"><circle cx="10.500" cy="13" r="1.200" stroke="#333" /><circle cx="14.500" cy="13" r="1.200" /><circle cx="18.500" cy="13" r="1.200" /></g><path d="M21 21.500H27V24.500z" fill="#aaa" /></Svg>
                </div>
              </div>
            </div>
          </div>
        </div>
      </div>
      <div className="flex w-[15px] flex-col rounded-[3px] border border-[#979797] bg-[#e2e2e2]">
        <div className="flex h-[14px] shrink-0 items-center justify-center rounded-t-[3px] border-b border-[#979797] bg-white"><Svg w={7} h={4}><path d="M3.500 0L7 4H0z" fill="#000" /></Svg></div>
        <div className="flex h-[524px] shrink-0 items-center justify-center border-b border-[#979797] bg-linear-to-r from-white to-[#f0f0f0]"><div className="h-[8px] w-[7px] bg-[repeating-linear-gradient(180deg,#c4c4c4_0_1px,transparent_1px_3px)]" /></div>
        <div className="grow" />
        <div className="flex h-[14px] shrink-0 items-center justify-center rounded-b-[3px] border-t border-[#979797] bg-white"><Svg w={7} h={4}><path d="M3.500 4L7 0H0z" fill="#000" /></Svg></div>
      </div>
      <div className="mt-[397px] ml-[1px] h-[40px] w-[4px] bg-[repeating-linear-gradient(180deg,#b8b8b8_0_1px,#d4d4d4_1px_2px)]" />
    </div>
    <Section title="Data Probe" open className="mt-[3px] w-[533px]" />
    <div className="mt-[44px] ml-[16px] flex flex-col leading-[17px]"><span>L</span><span>F</span><span>B</span></div>
  </div>
);

const Views = () => (
  <div className="flex w-[1381px] flex-col bg-white">
    <div className="flex h-[14px] shrink-0 items-center bg-linear-to-b from-[#7a8af5] via-[#6673d0] via-30% to-[#7888f0] pl-[6px]">
      <Pin />
      <div className="ml-[4px] flex h-full w-[16px] items-center justify-center bg-[#b2baf8]">1</div>
      <Svg w={12} h={12} className="ml-[4px]"><circle cx="6" cy="6" r="3.600" fill="none" stroke="#2c3264" /><circle cx="6" cy="6" r="1.300" fill="none" stroke="#2c3264" /><path d="M6 0V2.500M6 9.500V12M0 6H2.500M9.500 6H12" stroke="#2c3264" /></Svg>
    </div>
    <div className="h-[694px] shrink-0 bg-linear-to-b from-[#7476ba] to-[#c1c3ea]">
      <div className="pt-[115px] pl-[561px]"><Fibers /></div>
    </div>
    <div className="flex h-[6px] shrink-0 items-center pl-[670px]"><div className="h-[4px] w-[40px] bg-[repeating-linear-gradient(90deg,#b8b8b8_0_1px,#d4d4d4_1px_2px)]" /></div>
    <div className="flex h-[315px] shrink-0">
      {slices.map((s, i) => (
        <div key={s.l} className={`flex grow basis-0 flex-col bg-black ${i ? "border-l border-[#55555f]" : ""}`}>
          <div className={`flex h-[15px] items-center bg-linear-to-b pl-[6px] ${s.bar}`}>
            <Pin />
            <div className={`ml-[4px] flex h-full w-[16px] items-center justify-center ${s.tag}`}>{s.l}</div>
            <Svg w={12} h={12} className="ml-[3px]"><rect x="3" y="2.500" width="6" height="7" fill="#222" opacity=".65" /><rect x="4" y="3" width="2.500" height="3" fill="#fff" opacity=".35" /><path d="M6 0V2M6 10V12M.5 6H2M10 6H11.500M2 2.500L3 3.500M10 2.500L9 3.500M2 9.500L3 8.500M10 9.500L9 8.500" stroke="#222" strokeWidth=".8" /></Svg>
            <Thumb className="ml-[10px] bg-white" />
            <div className="h-[6px] grow border border-l-0 border-[#8a8a8a] bg-[#ebebeb]" />
            <div className={`ml-[4px] flex h-full w-[72px] items-center pl-[2px] tracking-[-0.45px] whitespace-nowrap ${s.tag}`}>{s.v}</div>
          </div>
        </div>
      ))}
    </div>
  </div>
);

const TaskBar = () => (
  <div className="flex h-[24px] items-start border-t border-[#e4e3e2] bg-[#edeceb] font-['DejaVu_Sans',sans-serif] [font-stretch:normal]">
    <Dots className="mt-[2px] ml-[3px] h-[18px] w-[6px]" />
    <div className="ml-[3px] flex w-[1795px] gap-[2px]">
      {tasks.map((t, i) => (
        <div key={i} className={`flex h-[22px] grow basis-0 items-center rounded-[3px] border border-[#8f8d8b] pl-[6px] ${t.active ? "bg-[#c4c2c0]" : "bg-linear-to-b from-white to-[#e8e7e6]"}`}>
          <div className="flex w-[17px] shrink-0 justify-center">{t.icon}</div>
          <span className="mb-px ml-[7px] whitespace-nowrap tracking-[-0.1px]">{t.t}</span>
        </div>
      ))}
    </div>
    <div className="ml-[11px] flex h-[22px] w-[67px] overflow-hidden rounded-[3px] border border-[#a8a4a0] bg-[#a8a4a0]">
      <div className="flex w-[33px] items-center justify-center border border-b-2 border-white border-b-[#4a6f9f] bg-[#d2e2f8]"><Ball w={17} /></div>
    </div>
    <Svg w={20} h={22} className="ml-[12px]">
      <path d="M1.500 4H18.500L17 21H3z" fill="#3b74bb" stroke="#1e4a86" /><path d="M4 7H7L7.500 19H5z" fill="#7fa9dc" /><ellipse cx="10" cy="3.500" rx="9" ry="2.300" fill="#2b5a99" stroke="#7ba3d4" />
    </Svg>
  </div>
);

export default function App() {
  return (
    <div className="flex h-[1200px] w-[1920px] flex-col overflow-hidden bg-white font-['DejaVu_Sans_Condensed','DejaVu_Sans',sans-serif] text-[13px] leading-[16px] whitespace-nowrap text-[#111] [font-stretch:condensed]">
      <TopPanel />
      <TitleBar />
      <div className="flex h-[22px] items-center border-b border-[#dedede] bg-linear-to-b from-white to-[#f1f1f1] pt-[3px]">
        <span className="ml-[12px] w-[38px]"><u>F</u>ile</span>
        <span className="w-[41px]"><u>E</u>dit</span>
        <span className="w-[47px]"><u>V</u>iew</span>
        <span><u>H</u>elp</span>
      </div>
      <Toolbar />
      <div className="flex h-[1029px]">
        <SidePanel />
        <Views />
      </div>
      <div className="flex h-[36px] items-center justify-end bg-white pr-[2px] pb-[2px]">
        <div className="flex h-[28px] w-[31px] items-center justify-center rounded-[3px] border border-[#9a9a9a] bg-white">
          <Svg w={25} h={25}><circle cx="12.500" cy="12.500" r="11.500" fill="#f80808" stroke="#b00808" strokeWidth=".8" /><path d="M8 8L17 17M17 8L8 17" stroke="#fff" strokeWidth="3" /></Svg>
        </div>
      </div>
      <TaskBar />
    </div>
  );
}
